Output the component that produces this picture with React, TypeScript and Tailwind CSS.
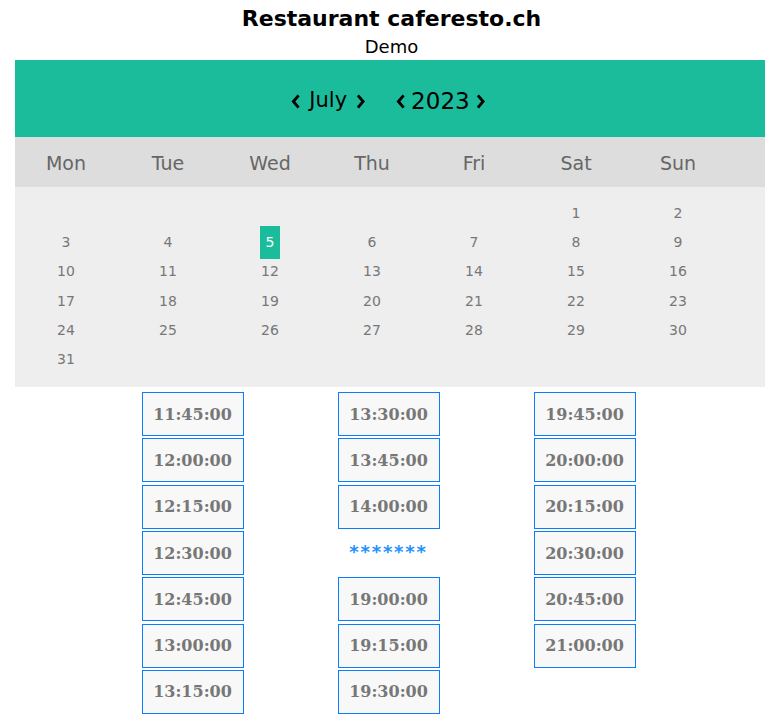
import React from "react";

const Chev = ({ dir, size }: { dir: "l" | "r"; size: number }) => (
  <svg width={size * 0.5} height={size} viewBox="0 0 10 20" className="inline-block">
    {dir === "l" ? (
      <polyline points="8,3.5 2.5,10 8,16.5" fill="none" stroke="#000" strokeWidth="3" strokeLinejoin="miter" />
    ) : (
      <polyline points="2,3.5 7.5,10 2,16.5" fill="none" stroke="#000" strokeWidth="3" strokeLinejoin="miter" />
    )}
  </svg>
);

const weekdays = ["Mon", "Tue", "Wed", "Thu", "Fri", "Sat", "Sun"];

const TimeBtn = ({ t }: { t: string }) => (
  <div className="w-[102px] h-[44px] border border-[#0a7cff] bg-[#f8f8f8] flex items-center justify-center text-[16px] font-bold text-[#777] pt-[1px] [font-family:'DejaVu_Serif',serif]">
    {t}
  </div>
);

export default function App() {
  const cells: (number | null)[] = [null, null, null, null, null];
  for (let i = 1; i <= 31; i++) cells.push(i);
  const rows: (number | null)[][] = [];
  for (let i = 0; i < cells.length; i += 7) rows.push(cells.slice(i, i + 7));

  const col1 = ["11:45:00", "12:00:00", "12:15:00", "12:30:00", "12:45:00", "13:00:00", "13:15:00"];
  const col2a = ["13:30:00", "13:45:00", "14:00:00"];
  const col2b = ["19:00:00", "19:15:00", "19:30:00"];
  const col3 = ["19:45:00", "20:00:00", "20:15:00", "20:30:00", "20:45:00", "21:00:00"];

  return (
    <div className="w-[783px] h-[717px] bg-white overflow-hidden [font-family:'DejaVu_Sans',sans-serif]">
      <div className="text-center pt-[4px] h-[60px]">
        <div className="text-[22px] font-bold leading-[30px] text-black">Restaurant caferesto.ch</div>
        <div className="text-[18px] leading-[26px] text-black">Demo</div>
      </div>
      <div className="ml-[15px] w-[750px]">
        <div className="h-[77px] bg-[#1abc9c] flex items-center justify-center text-black pt-[5px] pr-[4px]">
          <div className="flex items-center gap-[9px] text-[21px]">
            <Chev dir="l" size={19} />
            <span>July</span>
            <Chev dir="r" size={19} />
          </div>
          <div className="w-[30px]" />
          <div className="flex items-center gap-[6px] text-[23px]">
            <Chev dir="l" size={19} />
            <span>2023</span>
            <Chev dir="r" size={19} />
          </div>
        </div>
        <div className="h-[50px] bg-[#ddd] flex items-center pt-[2px]">
          {weekdays.map((d) => (
            <div key={d} className="w-[102px] text-center text-[19px] text-[#666]">
              {d}
            </div>
          ))}
        </div>
        <div className="bg-[#eee] pt-[12px] pb-[13px]">
          {rows.map((r, ri) => (
            <div key={ri} className="flex h-[29.2px] items-center">
              {Array.from({ length: 7 }).map((_, ci) => {
                const v = r[ci];
                return (
                  <div key={ci} className="w-[102px] text-center text-[14px] text-[#777]">
                    {v === 5 ? (
                      <span className="inline-block bg-[#1abc9c] text-white px-[6px] py-[6px] -my-[6px] font-normal">5</span>
                    ) : v ? (
                      v
                    ) : (
                      ""
                    )}
                  </div>
                );
              })}
            </div>
          ))}
        </div>
      </div>
      <div className="flex justify-center pt-[5px] pr-[6px]">
        <div className="w-[196px] flex flex-col items-center gap-[2.3px]">
          {col1.map((t) => (
            <TimeBtn key={t} t={t} />
          ))}
        </div>
        <div className="w-[196px] flex flex-col items-center gap-[2.3px]">
          {col2a.map((t) => (
            <TimeBtn key={t} t={t} />
          ))}
          <div className="h-[44px] flex items-center justify-center text-[18px] font-bold text-[#1e90ff] tracking-[1.8px] pb-[4px]">
            *******
          </div>
          {col2b.map((t) => (
            <TimeBtn key={t} t={t} />
          ))}
        </div>
        <div className="w-[196px] flex flex-col items-center gap-[2.3px]">
          {col3.map((t) => (
            <TimeBtn key={t} t={t} />
          ))}
        </div>
      </div>
    </div>
  );
}
